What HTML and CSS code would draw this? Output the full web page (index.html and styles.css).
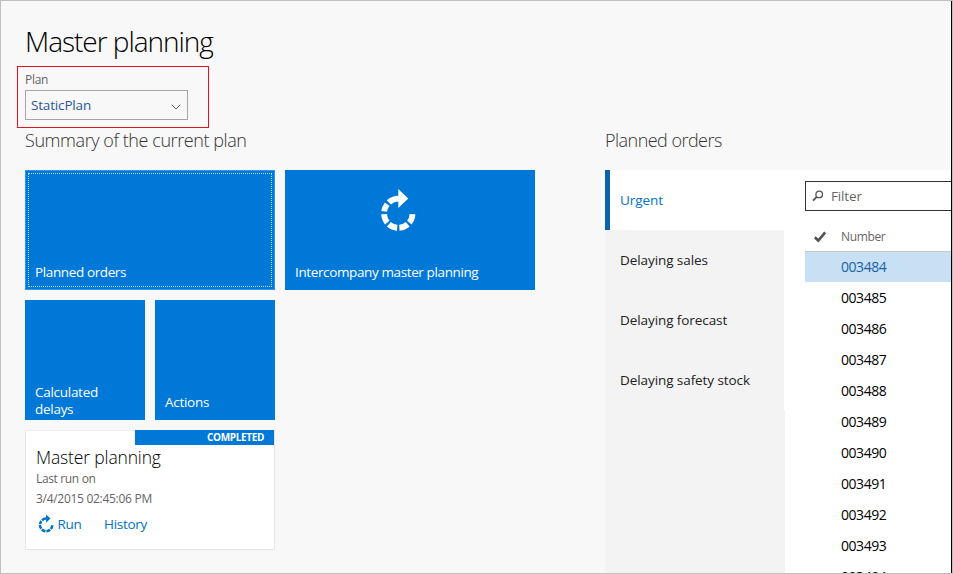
FILE: index.html
```html
<!DOCTYPE html>
<html lang="en">
<head>
<meta charset="utf-8">
<title>Master planning</title>
<link rel="stylesheet" href="styles.css">
</head>
<body>
<svg class="defs" aria-hidden="true">
  <symbol id="cycle" viewBox="0 0 36 44">
    <path d="M32.500 26.200A14.200 14.200 0 0 1 4.100 25" fill="none" stroke="currentColor" stroke-width="5.800" stroke-dasharray="9.100 2.250"/>
    <path d="M4.200 23.300A14.200 14.200 0 0 1 7.200 16.200M8.800 14.400A14.200 14.200 0 0 1 18.800 10.600" fill="none" stroke="currentColor" stroke-width="5.800"/>
    <path d="M18.300 1L28.300 10.500L18.300 20Z" fill="currentColor"/>
  </symbol>
</svg>
<div class="page">
  <main class="summary">
    <h1>Master planning</h1>
    <div class="plan">
      <label class="plan-label"><span class="t-plan">Plan</span></label>
      <div class="select"><span class="t-static">StaticPlan</span>
        <svg class="chevron" viewBox="0 0 10 6"><path d="M.7.7L5 5L9.300.7" fill="none" stroke="#666"/></svg>
      </div>
    </div>
    <h2 class="t-summary">Summary of the current plan</h2>
    <div class="tiles">
      <div class="tile wide focused"><span class="t-planned">Planned orders</span></div>
      <div class="tile wide"><svg class="tile-icon"><use href="#cycle"/></svg><span class="t-inter">Intercompany master planning</span></div>
      <div class="tile small two"><span class="t-calc">Calculated<br>delays</span></div>
      <div class="tile small"><span class="t-actions">Actions</span></div>
    </div>
    <section class="job">
      <div class="badge"><span>COMPLETED</span></div>
      <h3><span class="t-job">Master planning</span></h3>
      <p><span class="t-last">Last run on</span></p>
      <p><span class="t-date">3/4/2015 02:45:06 PM</span></p>
      <div class="links"><svg class="run-icon"><use href="#cycle"/></svg><a class="t-run">Run</a><a class="t-history">History</a></div>
    </section>
  </main>
  <section class="orders">
    <h2 class="t-orders">Planned orders</h2>
    <div class="panel">
      <nav class="tabs">
        <div class="tab active"><span class="t-urgent">Urgent</span></div>
        <div class="tab"><span class="t-sales">Delaying sales</span></div>
        <div class="tab"><span class="t-forecast">Delaying forecast</span></div>
        <div class="tab"><span class="t-safety">Delaying safety stock</span></div>
        <div class="rest"></div>
      </nav>
      <div class="grid">
        <div class="filter"><svg class="search" viewBox="0 0 12 12"><circle cx="7.2" cy="4.4" r="3.3" fill="none" stroke="#555" stroke-width="1.3"/><path d="M4.800 6.800L1 10.600" stroke="#555" stroke-width="1.900"/></svg><span class="t-filter">Filter</span></div>
        <div class="head"><svg class="check" viewBox="0 0 12 12"><path d="M.8 6.300L4.300 9.600L11.200 1.300" fill="none" stroke="#555" stroke-width="2.700"/></svg><span class="t-number">Number</span></div>
        <div class="row selected"><span>003484</span></div>
        <div class="row"><span>003485</span></div>
        <div class="row"><span>003486</span></div>
        <div class="row"><span>003487</span></div>
        <div class="row"><span>003488</span></div>
        <div class="row"><span>003489</span></div>
        <div class="row"><span>003490</span></div>
        <div class="row"><span>003491</span></div>
        <div class="row"><span>003492</span></div>
        <div class="row"><span>003493</span></div>
        <div class="row"><span>003494</span></div>
      </div>
    </div>
  </section>
</div>
</body>
</html>
```
FILE: styles.css
```css
* { box-sizing: border-box; margin: 0; padding: 0; }
body { font: 13.5px/17px "Open Sans", "Noto Sans", sans-serif; color: #222; overflow: hidden; }
.defs { display: block; width: 0; height: 0; }
.page { width: 953px; height: 574px; display: flex; background: #f8f8f8; border: 1px solid #c0c0c0; overflow: hidden; }
span, a, h1, h2, h3 { white-space: nowrap; }
.summary { width: 604px; padding-left: 24px; flex: none; }
h1 { font-size: 28px; font-weight: 300; line-height: 38px; color: #000; margin-top: 21px; letter-spacing: -1.03px; }
.plan { width: 192px; height: 62px; margin: 6px 0 0 -8px; border: 1px solid #e81123; padding: 5px 7px; }
.plan-label { display: block; font-size: 12px; line-height: 16px; color: #666; height: 18px; letter-spacing: -0.3px; }
.select { width: 163px; height: 30px; border: 1px solid #a6a6a6; display: flex; align-items: center; justify-content: space-between; padding: 0 6px 0 5px; color: #2b579a; letter-spacing: -0.17px; }
.chevron { width: 10px; height: 6px; margin-top: 3px; }
h2 { font-size: 18px; font-weight: 300; line-height: 24px; color: #333; letter-spacing: -0.42px; }
.t-summary { margin-bottom: 18px; }
.tiles { display: flex; flex-wrap: wrap; gap: 10px; width: 510px; }
.tile { height: 120px; background: #0078d7; color: #fff; padding: 0 10px 9px; display: flex; flex-direction: column; justify-content: flex-end; align-items: flex-start; letter-spacing: -0.38px; }
.wide { width: 250px; }
.small { width: 120px; letter-spacing: -0.28px; }
.two { padding-bottom: 2px; }
.focused { border: 1px solid #2a98f0; outline: 1px dotted #b9dcf8; outline-offset: -4px; padding: 0 9px 8px; }
.tile-icon { width: 36px; height: 44px; margin: 0 0 32px 85px; color: #fff; }
.job { width: 250px; height: 120px; margin-top: 10px; background: #fff; border: 1px solid #e5e5e5; border-top-color: #eee; padding-left: 10px; }
.badge { width: 139px; height: 15px; margin: -1px 0 0 99px; background: #0078d7; color: #fff; font-size: 10px; font-weight: 700; line-height: 15px; letter-spacing: -0.35px; text-align: right; padding-right: 10px; }
h3 { font-size: 17.5px; font-weight: 300; line-height: 24px; color: #000; height: 25px; letter-spacing: -0.15px; }
.job p { font-size: 12px; line-height: 18px; height: 19px; color: #666; letter-spacing: -0.35px; }
.job p + p { height: 20px; margin-top: 1px; letter-spacing: -0.29px; }
.links { display: flex; align-items: center; height: 18px; margin-top: 5px; color: #0072ca; letter-spacing: -0.3px; }
.run-icon { width: 16px; height: 19px; margin: -1px 3.500px 0 2px; }
.t-history { margin-left: 22.500px; }
.orders { width: 347px; height: 572px; flex: none; border-right: 1px solid #000; overflow: hidden; }
.t-orders { margin-top: 127px; letter-spacing: -0.53px; }
.panel { display: flex; height: 403px; margin-top: 18px; background: #fff; }
.tabs { width: 180px; flex: none; display: flex; flex-direction: column; letter-spacing: -0.08px; }
.tab { width: 179px; height: 60px; padding-left: 15px; display: flex; align-items: center; background: #f3f3f3; }
.tab.active { background: #fff; border-left: 5px solid #0c63ad; padding-left: 10px; color: #0072ca; }
.rest { flex: 1; background: #f3f3f3; }
.grid { margin-left: 20px; padding-top: 11px; width: 146px; flex: none; }
.filter { height: 30px; border: 1px solid #333; border-right: 0; display: flex; align-items: center; padding-left: 6px; color: #666; letter-spacing: -0.15px; }
.search { width: 12px; height: 12px; margin-right: 7px; }
.head { height: 41px; border-bottom: 1px solid #c8c8c8; display: flex; align-items: center; padding: 11px 0 0 9px; font-size: 12px; color: #666; letter-spacing: -0.35px; }
.check { width: 12px; height: 12px; margin-right: 15px; }
.row { height: 31px; padding-left: 36px; font-size: 14px; line-height: 29px; color: #000; letter-spacing: -0.45px; }
.row.selected { height: 30px; margin-bottom: 1px; line-height: 30px; background: #c7e0f4; color: #2060a8; }
```
